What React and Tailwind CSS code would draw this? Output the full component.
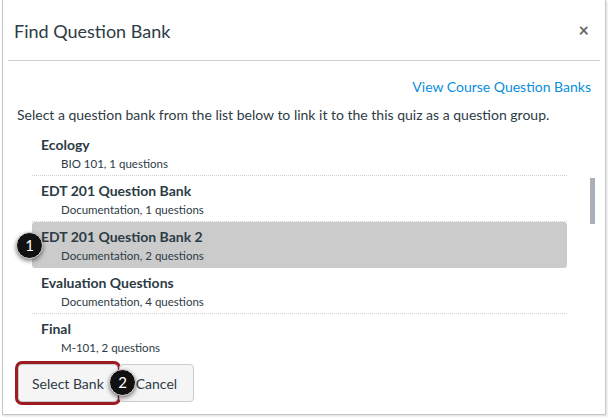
import React from "react";

const items = [
  { title: "Ecology", sub: "BIO 101, 1 questions" },
  { title: "EDT 201 Question Bank", sub: "Documentation, 1 questions" },
  { title: "EDT 201 Question Bank 2", sub: "Documentation, 2 questions", active: true },
  { title: "Evaluation Questions", sub: "Documentation, 4 questions" },
  { title: "Final", sub: "M-101, 2 questions", last: true },
];

function Badge({ n, className }) {
  return (
    <div
      className={
        "absolute w-[27px] h-[27px] rounded-full bg-[#111] text-white flex items-center justify-center text-[15px] shadow-[0_2px_4px_rgba(0,0,0,0.5)] border border-[#ddd] " +
        className
      }
    >
      {n}
    </div>
  );
}

export default function App() {
  return (
    <div
      className="relative w-[609px] h-[419px] bg-white overflow-hidden pl-[2px]"
      style={{ fontFamily: "Lato, 'Open Sans', sans-serif" }}
    >
      <div className="w-[604px] h-[415px] border-l border-r border-b border-[#c5c8cc] shadow-[1px_1px_2px_rgba(0,0,0,0.15)] flex flex-col text-[#2d3b45]">
        {/* header */}
        <div className="h-[60px] flex items-center justify-between pl-[11px] pr-[16px]">
          <div className="text-[18px] leading-[24px] pt-[2px]">Find Question Bank</div>
          <div className="text-[18px] font-bold text-[#666] leading-none">×</div>
        </div>
        <div className="mx-[5px] h-px bg-[#c7cdd1]" />
        {/* body */}
        <div className="flex flex-col pt-[16px]">
          <div className="flex justify-end pr-[14px]">
            <span className="text-[14px] leading-[20px] text-[#0a8de0]">View Course Question Banks</span>
          </div>
          <div className="pl-[14px] mt-[8px] text-[14px] leading-[20px]">
            Select a question bank from the list below to link it to the this quiz as a question group.
          </div>
          <div className="flex mt-[5px] h-[230px] overflow-hidden">
            <div className="ml-[29px] w-[535px] flex flex-col">
              {items.map((it) => (
                <div
                  key={it.title}
                  className={
                    "h-[46px] shrink-0 pt-[5px] pl-[9px] " +
                    (it.active
                      ? "bg-[#cbcbcb] rounded-[3px] border-b border-transparent"
                      : it.last
                      ? ""
                      : "border-b border-dotted border-[#cfd3d6]")
                  }
                >
                  <div className="text-[14px] leading-[20px] font-bold">{it.title}</div>
                  <div className="pl-[20px] text-[11.5px] leading-[17px]">{it.sub}</div>
                </div>
              ))}
            </div>
            <div className="ml-[23px] mt-[48px] w-[5px] h-[46px] bg-[#a9b0b7]" />
          </div>
        </div>
        {/* footer */}
        <div className="flex items-start pl-[15px] mt-[4px] gap-[1px]">
          <button className="h-[38px] px-[13px] text-[14px] bg-[#f5f5f5] border border-[#c7cdd1] rounded-[4px] text-[#2d3b45] ring-[3px] ring-[#9d1a1f]">
            Select Bank
          </button>
          <button className="h-[38px] px-[16px] text-[14px] bg-[#f5f5f5] border border-[#c7cdd1] rounded-[4px] text-[#2d3b45]">
            Cancel
          </button>
        </div>
      </div>
      <Badge n="1" className="left-[16px] top-[232px]" />
      <Badge n="2" className="left-[109px] top-[369px]" />
    </div>
  );
}
